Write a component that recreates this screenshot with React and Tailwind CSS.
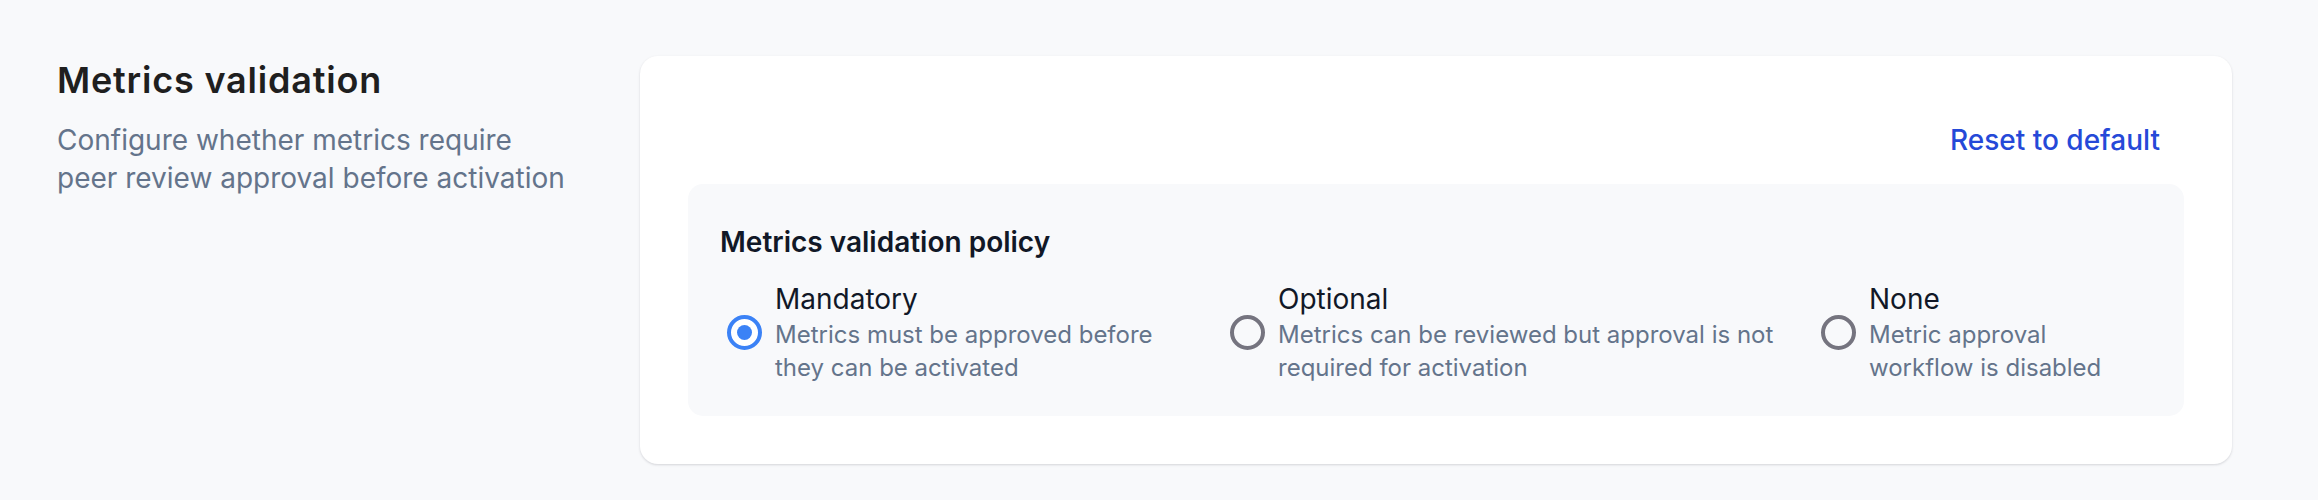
import { useState } from 'react';

const options = [
  {
    id: 'mandatory',
    label: 'Mandatory',
    description: 'Metrics must be approved before they can be activated',
    textWidth: 'max-w-[400px]',
  },
  {
    id: 'optional',
    label: 'Optional',
    description: 'Metrics can be reviewed but approval is not required for activation',
    textWidth: 'max-w-[520px]',
  },
  {
    id: 'none',
    label: 'None',
    description: 'Metric approval workflow is disabled',
    textWidth: 'max-w-[250px]',
  },
];

const RadioDot = ({ checked }) => (
  <span
    className={`ml-[7px] flex h-[35px] w-[35px] shrink-0 items-center justify-center rounded-full border-[4px] ${
      checked ? 'border-[#3b82f6] bg-white' : 'border-[#75747f] bg-transparent'
    }`}
  >
    {checked && <span className="h-[15px] w-[15px] rounded-full bg-[#3b82f6]"></span>}
  </span>
);

const App = () => {
  const [policy, setPolicy] = useState('mandatory');

  return (
    <div className="min-h-[500px] bg-[#f8f9fb] pl-[57px] pt-[56px] font-['Inter',sans-serif]">
      <div className="grid grid-cols-[583px_1592px]">
        {/* Section intro */}
        <div>
          <h2 className="text-[36px] leading-[48px] font-semibold tracking-[0.8px] text-[#1f1f1f]">
            Metrics validation
          </h2>
          <p className="mt-[17px] text-[28px] leading-[38px] text-[#64748b]">
            Configure whether metrics require
            <br />
            peer review approval before activation
          </p>
        </div>

        {/* Card */}
        <div className="rounded-[18px] bg-white p-[48px] shadow-[0_1px_3px_rgba(15,23,42,0.10),0_1px_2px_rgba(15,23,42,0.06)]">
          <div className="flex justify-end">
            <button
              onClick={() => setPolicy('mandatory')}
              className="px-[24px] py-[16px] text-[28px] leading-[40px] font-medium text-[#2549d8]"
            >
              Reset to default
            </button>
          </div>

          <div className="mt-[8px] rounded-[15px] bg-[#f8f9fb] px-[32px] pt-[37px] pb-[32px]">
            <h3 className="text-[28px] leading-[42px] font-semibold text-[#111827]">
              Metrics validation policy
            </h3>
            <div className="mt-[18px] grid grid-cols-[503px_591px_1fr]">
              {options.map((opt) => (
                <label
                  key={opt.id}
                  onClick={() => setPolicy(opt.id)}
                  className="flex cursor-pointer items-center gap-[13px]"
                >
                  <RadioDot checked={policy === opt.id} />
                  <div className={opt.textWidth}>
                    <div className="text-[28px] leading-[37px] text-[#111827]">{opt.label}</div>
                    <div className="text-[24px] leading-[33px] text-[#64748b]">{opt.description}</div>
                  </div>
                </label>
              ))}
            </div>
          </div>
        </div>
      </div>
    </div>
  );
};

export default App;
